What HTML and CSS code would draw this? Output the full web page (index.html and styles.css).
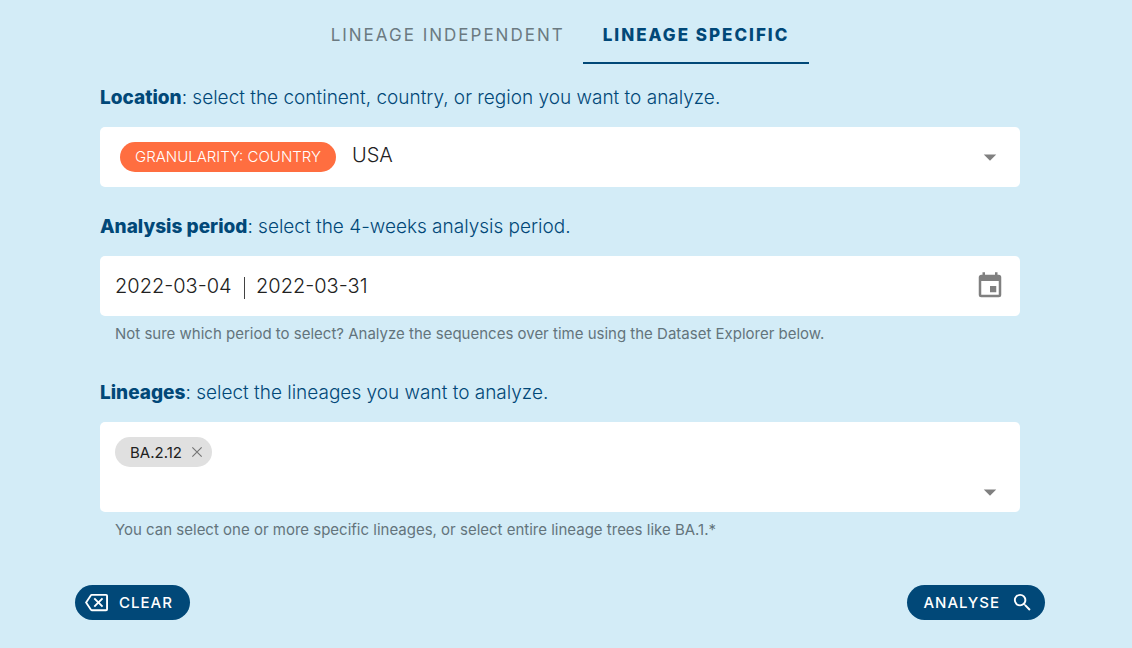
FILE: index.html
```
<!DOCTYPE html>
<html lang="en">
<head>
<meta charset="utf-8">
<meta name="viewport" content="width=device-width, initial-scale=1">
<title>Lineage analysis</title>
<link rel="stylesheet" href="styles.css">
</head>
<body>
<main class="page">
  <div class="tabs" role="tablist">
    <button class="tab" type="button" role="tab" aria-selected="false">LINEAGE INDEPENDENT</button>
    <button class="tab tab-active" type="button" role="tab" aria-selected="true">LINEAGE SPECIFIC</button>
  </div>
  <form class="form">
    <section class="group">
      <label class="title" for="location"><strong>Location</strong>: select the continent, country, or region you want to analyze.</label>
      <div class="field">
        <span class="badge">GRANULARITY: COUNTRY</span>
        <select class="control location" id="location"><option>USA</option></select>
        <svg class="arrow" viewBox="0 0 24 24" aria-hidden="true"><path d="M7 10l5 5 5-5z"/></svg>
      </div>
    </section>
    <section class="group">
      <label class="title" for="period"><strong>Analysis period</strong>: select the 4-weeks analysis period.</label>
      <div class="field">
        <div class="range">
          <input class="control date" id="period" type="text" value="2022-03-04" readonly>
          <span class="divider"></span>
          <input class="control date" type="text" value="2022-03-31" aria-label="End of analysis period" readonly>
        </div>
        <svg class="calendar" viewBox="0 0 24 24" aria-hidden="true"><path d="M19 19H5V8h14m-3-7v2H8V1H6v2H5c-1.110 0-2 .89-2 2v14a2 2 0 0 0 2 2h14a2 2 0 0 0 2-2V5a2 2 0 0 0-2-2h-1V1m-1 11h-5v5h5v-5z"/></svg>
      </div>
      <p class="hint">Not sure which period to select? Analyze the sequences over time using the Dataset Explorer below.</p>
    </section>
    <section class="group group-spaced">
      <label class="title" for="lineages"><strong>Lineages</strong>: select the lineages you want to analyze.</label>
      <div class="field field-tall">
        <div class="choices">
          <span class="chip">BA.2.12
            <button class="chip-close" type="button" aria-label="Remove BA.2.12"><svg viewBox="0 0 12 12" aria-hidden="true"><path d="M2 2l8 8M10 2l-8 8"/></svg></button>
          </span>
          <input class="control" id="lineages" type="text">
        </div>
        <svg class="arrow" viewBox="0 0 24 24" aria-hidden="true"><path d="M7 10l5 5 5-5z"/></svg>
      </div>
      <p class="hint">You can select one or more specific lineages, or select entire lineage trees like BA.1.*</p>
    </section>
    <div class="actions">
      <button class="action action-clear" type="reset">
        <svg viewBox="0 0 24 24" aria-hidden="true"><path d="M19 15.590L17.590 17 14 13.410 10.410 17 9 15.590 12.590 12 9 8.410 10.410 7 14 10.590 17.590 7 19 8.410 15.410 12 19 15.590M22 3a2 2 0 0 1 2 2v14a2 2 0 0 1-2 2H7c-.69 0-1.230-.36-1.590-.89L0 12l5.410-8.120C5.770 3.350 6.310 3 7 3h15m0 2H7l-4.720 7L7 19h15V5z"/></svg>
        CLEAR
      </button>
      <button class="action action-run" type="submit">
        ANALYSE
        <svg viewBox="0 0 24 24" aria-hidden="true"><path d="M9.500 3A6.500 6.500 0 0 1 16 9.500c0 1.610-.59 3.090-1.560 4.230l.27.27h.79l5 5-1.500 1.500-5-5v-.79l-.27-.27A6.516 6.516 0 0 1 9.500 16 6.500 6.500 0 0 1 3 9.500 6.500 6.500 0 0 1 9.500 3m0 2C7 5 5 7 5 9.500S7 14 9.500 14 14 12 14 9.500 12 5 9.500 5z"/></svg>
      </button>
    </div>
  </form>
</main>
</body>
</html>
```
FILE: styles.css
```
* { box-sizing: border-box; }

body {
  margin: 0;
  background: #d3ecf7;
  color: #212121;
  font-family: Inter, "Liberation Sans", sans-serif;
}

button, input, select {
  font: inherit;
  color: inherit;
  letter-spacing: inherit;
}

button { cursor: pointer; }

.page { padding: 4px 87px 28px 75px; }

.tabs { display: flex; justify-content: center; }

.tab {
  height: 60px;
  padding: 4px 18px 0 20px;
  border: 0;
  border-bottom: 2px solid transparent;
  background: none;
  color: #6b7a81;
  font-size: 17px;
  letter-spacing: 2px;
}

.tab-active {
  padding-right: 20px;
  border-color: #014878;
  color: #014878;
  font-weight: 800;
}

.group { padding: 20px 25px 0; }

.group + .group { padding-top: 26px; }

.group + .group-spaced { padding-top: 35px; }

.title {
  display: block;
  margin-bottom: 15px;
  color: #014878;
  font-size: 19px;
  line-height: 28px;
  font-weight: 300;
}

.title strong { font-weight: 800; }

.field {
  display: flex;
  align-items: center;
  min-height: 60px;
  padding: 15px;
  border-radius: 5px;
  background: #fff;
  font-size: 20px;
}

.field-tall { align-items: flex-end; padding-bottom: 5px; }

.control {
  flex: 1;
  min-width: 0;
  height: 30px;
  padding: 0;
  border: 0;
  outline: 0;
  background: none;
  font-weight: 300;
  appearance: none;
}

.location { padding-bottom: 4px; }

.range {
  display: flex;
  flex: 1;
  align-items: center;
}

.date { flex: none; width: 120px; }

.divider {
  width: 1px;
  height: 22px;
  margin: 3px 11px 0 9px;
  background: #424242;
}

.badge {
  margin: 0 16px 0 5px;
  padding: 0 15px;
  border-radius: 15px;
  background: #ff6e40;
  color: #fff;
  font-size: 15px;
  font-weight: 300;
  line-height: 30px;
}

.arrow, .calendar {
  width: 30px;
  height: 30px;
  fill: #808080;
}

.choices {
  display: flex;
  flex: 1;
  flex-direction: column;
  align-items: flex-start;
  gap: 10px;
}

.choices .control { flex: none; width: 100%; }

.chip {
  display: flex;
  align-items: center;
  gap: 8px;
  height: 30px;
  padding: 0 8px 0 15px;
  border-radius: 15px;
  background: #e0e0e0;
  font-size: 15px;
}

.chip-close {
  display: flex;
  padding: 0;
  border: 0;
  background: none;
}

.chip-close svg {
  width: 14px;
  height: 14px;
  fill: none;
  stroke: #757575;
}

.hint {
  margin: 0;
  padding: 8px 15px 0;
  color: #63747c;
  font-size: 15px;
  line-height: 20px;
}

.actions {
  display: flex;
  justify-content: space-between;
  padding-top: 45px;
}

.action {
  display: flex;
  align-items: center;
  height: 35px;
  border: 0;
  border-radius: 18px;
  background: #014878;
  color: #fff;
  font-size: 15px;
  font-weight: 500;
  letter-spacing: 1px;
}

.action-clear { gap: 11px; padding: 0 17px 0 10px; }

.action-run { gap: 11px; padding: 0 11px 0 16px; }

.action svg { width: 23px; height: 23px; fill: currentColor; }
```
